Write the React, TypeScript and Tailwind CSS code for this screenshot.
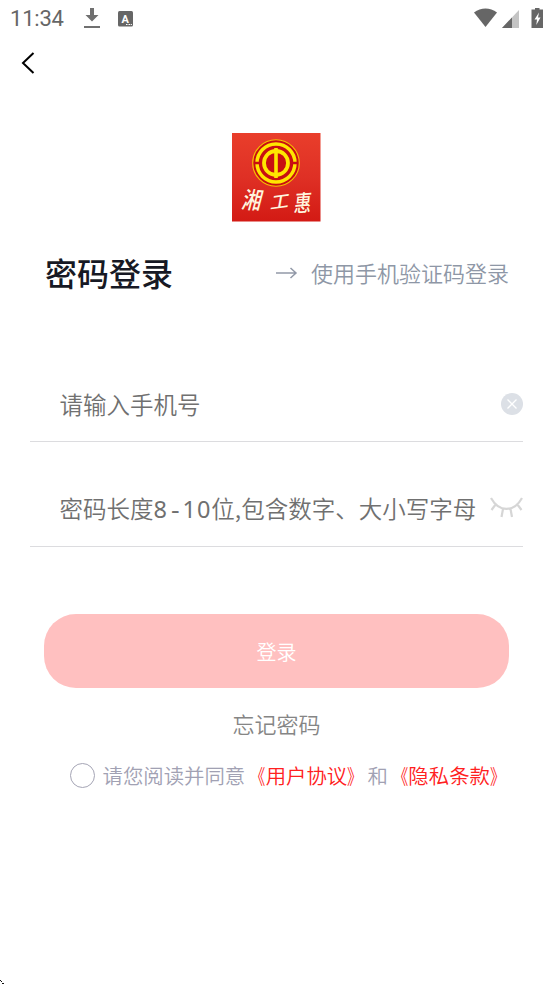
import { ReactNode } from "react";

function StatusBar() {
    return (
        <div className="flex h-[38px] items-center pl-[10px] text-[#666]">
            <span className="w-[72px] font-['Roboto'] text-[22px] leading-[38px] font-normal tracking-[-0.2px]">
                11:34
            </span>
            <svg width="18" height="22" viewBox="0 0 18 22" className="ml-[1px]">
                <path d="M7 0h4v7h4.500l-6.500 6.500L2.500 7H7z" fill="#707070" />
                <rect x="1" y="18" width="16" height="2" fill="#707070" />
            </svg>
            <svg width="16" height="16" viewBox="0 0 16 16" className="ml-[17px]">
                <rect x="0" y="0" width="15" height="15.500" rx="1.500" fill="#666" />
                <text
                    x="7.300"
                    y="11.500"
                    textAnchor="middle"
                    fontFamily="Roboto"
                    fontWeight="700"
                    fontSize="11"
                    fill="#fff"
                >
                    A
                </text>
                <path d="M8 13.500h1.500M10.500 13.500h1.500M12.700 13.500h1.200" stroke="#fff" />
            </svg>
            <svg width="80" height="22" viewBox="0 0 80 22" className="ml-auto">
                <path d="M1 4.500C8-.7 17-.7 24 4.500L12.500 19z" fill="#666" />
                <path d="M46 2v18H29z" fill="#c4c4c4" />
                <path d="M39 9.400V20H29z" fill="#666" />
                <path d="M62 0h4.500v1.500H70V20H58.500V1.500H62z" fill="#666" />
                <path d="M66 4.500l-4.500 7h2.500l-.7 5.500 4.200-7.500h-2.500z" fill="#fff" />
            </svg>
        </div>
    );
}

function Logo() {
    return (
        <svg width="89" height="89" viewBox="0 0 89 89" className="mx-auto block">
            <defs>
                <linearGradient id="logoBg" x1="0" y1="0" x2="0" y2="1">
                    <stop offset="0" stopColor="#e93e2b" />
                    <stop offset="0.500" stopColor="#df3025" />
                    <stop offset="1" stopColor="#d31a14" />
                </linearGradient>
            </defs>
            <rect width="88.500" height="88.500" fill="url(#logoBg)" />
            <circle cx="44" cy="30" r="23.300" fill="#c80f12" stroke="#f5c000" strokeWidth="1.100" />
            <g fill="none" stroke="#ffe600">
                <circle cx="44" cy="30" r="19" strokeWidth="3.500" />
                <circle cx="44" cy="30" r="12" strokeWidth="3.800" />
            </g>
            <path d="M22.500 30h6.500M59 30h6.500" stroke="#c80f12" strokeWidth="2.600" />
            <path d="M44 15v30" stroke="#ffe600" strokeWidth="3.600" />
            <g
                fill="#fff5df"
                fontFamily="'Noto Sans CJK SC', sans-serif"
                fontWeight="500"
                textAnchor="middle"
            >
                <text fontSize="22" transform="translate(18.500 75.500) skewX(-12) rotate(3) scale(.9 1.050)">湘</text>
                <text fontSize="18" transform="translate(47 75) skewX(-18) rotate(-8)">工</text>
                <text fontSize="20" transform="translate(70 78.500) skewX(-10) rotate(-4) scale(.85 1.150)">惠</text>
            </g>
        </svg>
    );
}

function Field({ children, icon }: { children: ReactNode; icon: ReactNode }) {
    return (
        <div className="flex h-[75px] items-center justify-between border-b border-[#dcdcdf] pl-[29.500px] text-[23.500px] text-[#707070]">
            <span className="w-0 pt-[2px] whitespace-nowrap">{children}</span>
            {icon}
        </div>
    );
}

function Agreement({ name }: { name: string }) {
    return (
        <span className="text-[#ff2020]">
            <span className="inline-block origin-right scale-x-[0.75]">《</span>
            {name}
            <span className="inline-block origin-left scale-x-[0.75]">》</span>
        </span>
    );
}

export default function App() {
    return (
        <div className="relative h-[984px] w-[553px] overflow-hidden bg-white font-['Noto_Sans_CJK_SC',sans-serif] font-[350]">
            <StatusBar />
            <header className="flex h-[50px] items-center pl-[21px]">
                <svg width="14" height="24" viewBox="0 0 14 24" fill="none">
                    <path d="M12.500 2L2 12l10.500 10" stroke="#000" strokeWidth="2" />
                </svg>
            </header>

            <main className="pt-[45px]">
                <Logo />

                <div className="mt-[26px] flex h-[48px] items-center justify-between pr-[44px] pl-[45px]">
                    <h1 className="text-[32px] font-medium text-[#171924]">密码登录</h1>
                    <a className="flex items-center text-[22px] text-[#8e97a6]">
                        <svg width="22" height="14" viewBox="0 0 22 14" fill="none" className="mr-[13px]">
                            <path d="M0 8h20M14.500 3L20 8l-5.500 5" stroke="#9299a8" strokeWidth="1.500" />
                        </svg>
                        使用手机验证码登录
                    </a>
                </div>

                <form className="mt-[71px] px-[30px]">
                    <Field
                        icon={
                            <svg width="22" height="22" viewBox="0 0 22 22">
                                <circle cx="11" cy="11" r="11" fill="#dce0e6" />
                                <path d="M6.500 6.500l9 9M15.500 6.500l-9 9" stroke="#fff" strokeWidth="1.300" />
                            </svg>
                        }
                    >
                        请输入手机号
                    </Field>
                    <div className="h-[30px]" />
                    <Field
                        icon={
                            <svg width="33" height="26" viewBox="0 0 33 26" fill="none" stroke="#d6d6d6" strokeWidth="2.200">
                                <path d="M1 2c8 14.500 23 14.500 31 0M6 8l-4.500 6M13 13l-1.500 8M20.500 13l1.500 8M27 8l4.500 6" />
                            </svg>
                        }
                    >
                        密码长度
                        <span className="font-['Noto_Sans'] font-normal tracking-[1px]">8</span>
                        <span className="inline-block w-[14.500px] text-center font-['Liberation_Mono']">-</span>
                        <span className="font-['Noto_Sans'] font-normal tracking-[1px]">10</span>
                        位,包含数字、大小写字母
                    </Field>
                </form>

                <div className="mt-[67px] px-[44px]">
                    <button className="h-[74px] w-full rounded-[32px] bg-[#ffc0c0] pt-[2px] text-[20px] text-white">
                        登录
                    </button>
                </div>
                <p className="mt-[18px] text-center text-[22px] leading-[34px] text-[#858585]">忘记密码</p>
                <div className="mt-[19px] flex h-[32px] items-center pl-[70px] text-[20.400px] whitespace-nowrap text-[#a1a1b3]">
                    <span className="mr-[7.500px] size-[25px] rounded-full border border-[#a5a5b5]" />
                    请您阅读并同意
                    <Agreement name="用户协议" />
                    和
                    <Agreement name="隐私条款" />
                </div>
            </main>

            <svg width="4" height="4" viewBox="0 0 4 4" className="absolute bottom-0 left-0">
                <path d="M0 0h1v1H0zM1 1h1v1H1zM2 3h2v1H2z" fill="#111" />
            </svg>
        </div>
    );
}
